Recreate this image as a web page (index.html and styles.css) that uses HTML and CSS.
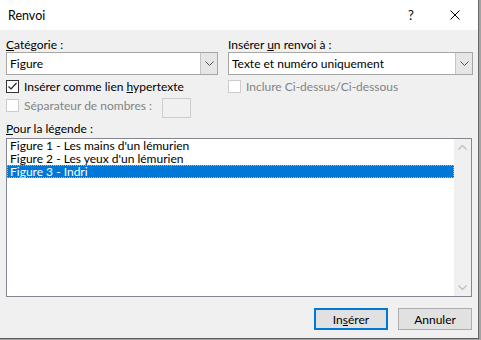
FILE: index.html
```html
<!DOCTYPE html>
<html lang="fr">
<head>
    <meta charset="UTF-8">
    <title>Renvoi</title>
    <link rel="stylesheet" href="styles.css">
</head>
<body>
    <div class="dialog">
        <div class="titlebar">
            <span class="title">Renvoi</span>
            <span class="help">?</span>
            <span class="close">
                <svg width="10" height="10" viewBox="0 0 10 10"><path d="M0.5 0.5L9.5 9.5M9.5 0.5L0.5 9.5" stroke="#000" stroke-width="1"/></svg>
            </span>
        </div>

        <div class="content">
            <div class="columns">
                <div class="col">
                    <div class="label"><u>C</u>atégorie :</div>
                    <div class="combo">
                        <span class="combo-text">Figure</span>
                        <span class="combo-btn"><svg width="9" height="5" viewBox="0 0 9 5"><path d="M0.5 0.5L4.5 4.5L8.5 0.5" fill="none" stroke="#555" stroke-width="1"/></svg></span>
                    </div>
                    <div class="check-row">
                        <span class="box checked"><svg width="11" height="11" viewBox="0 0 11 11"><path d="M1.5 5.5L4 8L9.5 2" fill="none" stroke="#222" stroke-width="1.2"/></svg></span>
                        <span>Insérer comme lien <u>h</u>ypertexte</span>
                    </div>
                    <div class="check-row sep-row disabled">
                        <span class="box"></span>
                        <span>Séparateur de nombres :</span>
                        <span class="small-input"></span>
                    </div>
                </div>
                <div class="col">
                    <div class="label">Insérer <u>u</u>n renvoi à :</div>
                    <div class="combo">
                        <span class="combo-text">Texte et numéro uniquement</span>
                        <span class="combo-btn"><svg width="9" height="5" viewBox="0 0 9 5"><path d="M0.5 0.5L4.5 4.5L8.5 0.5" fill="none" stroke="#555" stroke-width="1"/></svg></span>
                    </div>
                    <div class="check-row disabled">
                        <span class="box"></span>
                        <span>Inclure Ci-dessus/Ci-dessous</span>
                    </div>
                </div>
            </div>

            <div class="label legend-label"><u>P</u>our la légende :</div>
            <div class="listbox">
                <div class="items">
                    <div class="item">Figure 1 - Les mains d'un lémurien</div>
                    <div class="item">Figure 2 - Les yeux d'un lémurien</div>
                    <div class="item selected">Figure 3 - Indri</div>
                </div>
                <div class="scrollbar">
                    <svg width="9" height="5" viewBox="0 0 9 5"><path d="M0.5 4.5L4.5 0.5L8.5 4.5" fill="none" stroke="#bfbfbf" stroke-width="1.3"/></svg>
                    <svg width="9" height="5" viewBox="0 0 9 5"><path d="M0.5 0.5L4.5 4.5L8.5 0.5" fill="none" stroke="#bfbfbf" stroke-width="1.3"/></svg>
                </div>
            </div>

            <div class="buttons">
                <button class="btn default">In<u>s</u>érer</button>
                <button class="btn">Annuler</button>
            </div>
        </div>
    </div>
</body>
</html>
```

FILE: styles.css
```css
body {
    margin: 0;
    background: #a3a3a3;
    font-family: Lato, "Noto Sans", sans-serif;
    font-size: 12px;
    color: #000;
}
.dialog {
    width: 479px;
    height: 339px;
    box-sizing: border-box;
    border-right: 1px solid #6a6a6a;
    border-bottom: 1px solid #5a5a5a;
    background: #f0f0f0;
}
.titlebar {
    height: 30px;
    background: #fff;
    display: flex;
    align-items: center;
    padding-left: 8px;
    font-size: 12.5px;
}
.title {
    flex: 1;
}
.help {
    width: 42px;
    text-align: left;
    font-size: 13px;
}
.close {
    width: 28px;
    display: flex;
    align-items: center;
}
.content {
    padding: 8px 5px 0 6px;
}
.columns {
    display: grid;
    grid-template-columns: 212px 245px;
    column-gap: 10px;
}
.label {
    height: 14px;
    line-height: 14px;
}
.combo {
    height: 23px;
    box-sizing: border-box;
    border: 1px solid #a6a6a6;
    background: #fff;
    display: flex;
    align-items: stretch;
}
.combo-text {
    flex: 1;
    padding-left: 3px;
    line-height: 21px;
}
.combo-btn {
    width: 16px;
    background: #e6e6e6;
    border-left: 1px solid #c4c4c4;
    display: flex;
    align-items: center;
    justify-content: center;
}
.check-row {
    height: 20px;
    margin-top: 1px;
    display: flex;
    align-items: center;
    gap: 5px;
}
.box {
    width: 13px;
    height: 13px;
    box-sizing: border-box;
    border: 1px solid #333;
    background: #fff;
    display: flex;
    align-items: center;
    justify-content: center;
}
.disabled {
    color: #838383;
}
.disabled .box {
    border-color: #cccccc;
}
.sep-row {
    margin-top: 2px;
    align-items: flex-start;
}
.sep-row .box {
    margin-top: 1px;
}
.sep-row span:nth-child(2) {
    line-height: 15px;
}
.small-input {
    width: 29px;
    height: 20px;
    box-sizing: border-box;
    border: 1px solid #cccccc;
    margin-left: auto;
    margin-right: 27px;
}
.legend-label {
    margin-top: 3px;
    height: 15px;
    line-height: 15px;
}
.listbox {
    margin-top: 2px;
    width: 466px;
    height: 159px;
    box-sizing: border-box;
    border: 1px solid #828790;
    background: #fff;
    display: flex;
}
.items {
    flex: 1;
}
.item {
    height: 13px;
    line-height: 13px;
    padding-left: 3px;
    white-space: nowrap;
}
.item.selected {
    background: #0078d7;
    color: #fff;
    outline: 1px dotted #e8a860;
    outline-offset: -1px;
}
.scrollbar {
    width: 17px;
    background: #f0f0f0;
    display: flex;
    flex-direction: column;
    align-items: center;
    justify-content: space-between;
    padding: 6px 0;
}
.buttons {
    margin-top: 11px;
    display: flex;
    justify-content: flex-end;
    gap: 10px;
    padding-right: 1px;
}
.btn {
    width: 74px;
    height: 22px;
    box-sizing: border-box;
    background: #e1e1e1;
    border: 1px solid #adadad;
    font-family: inherit;
    font-size: 12px;
    padding: 0;
}
.btn.default {
    border: 2px solid #0078d7;
}
```
